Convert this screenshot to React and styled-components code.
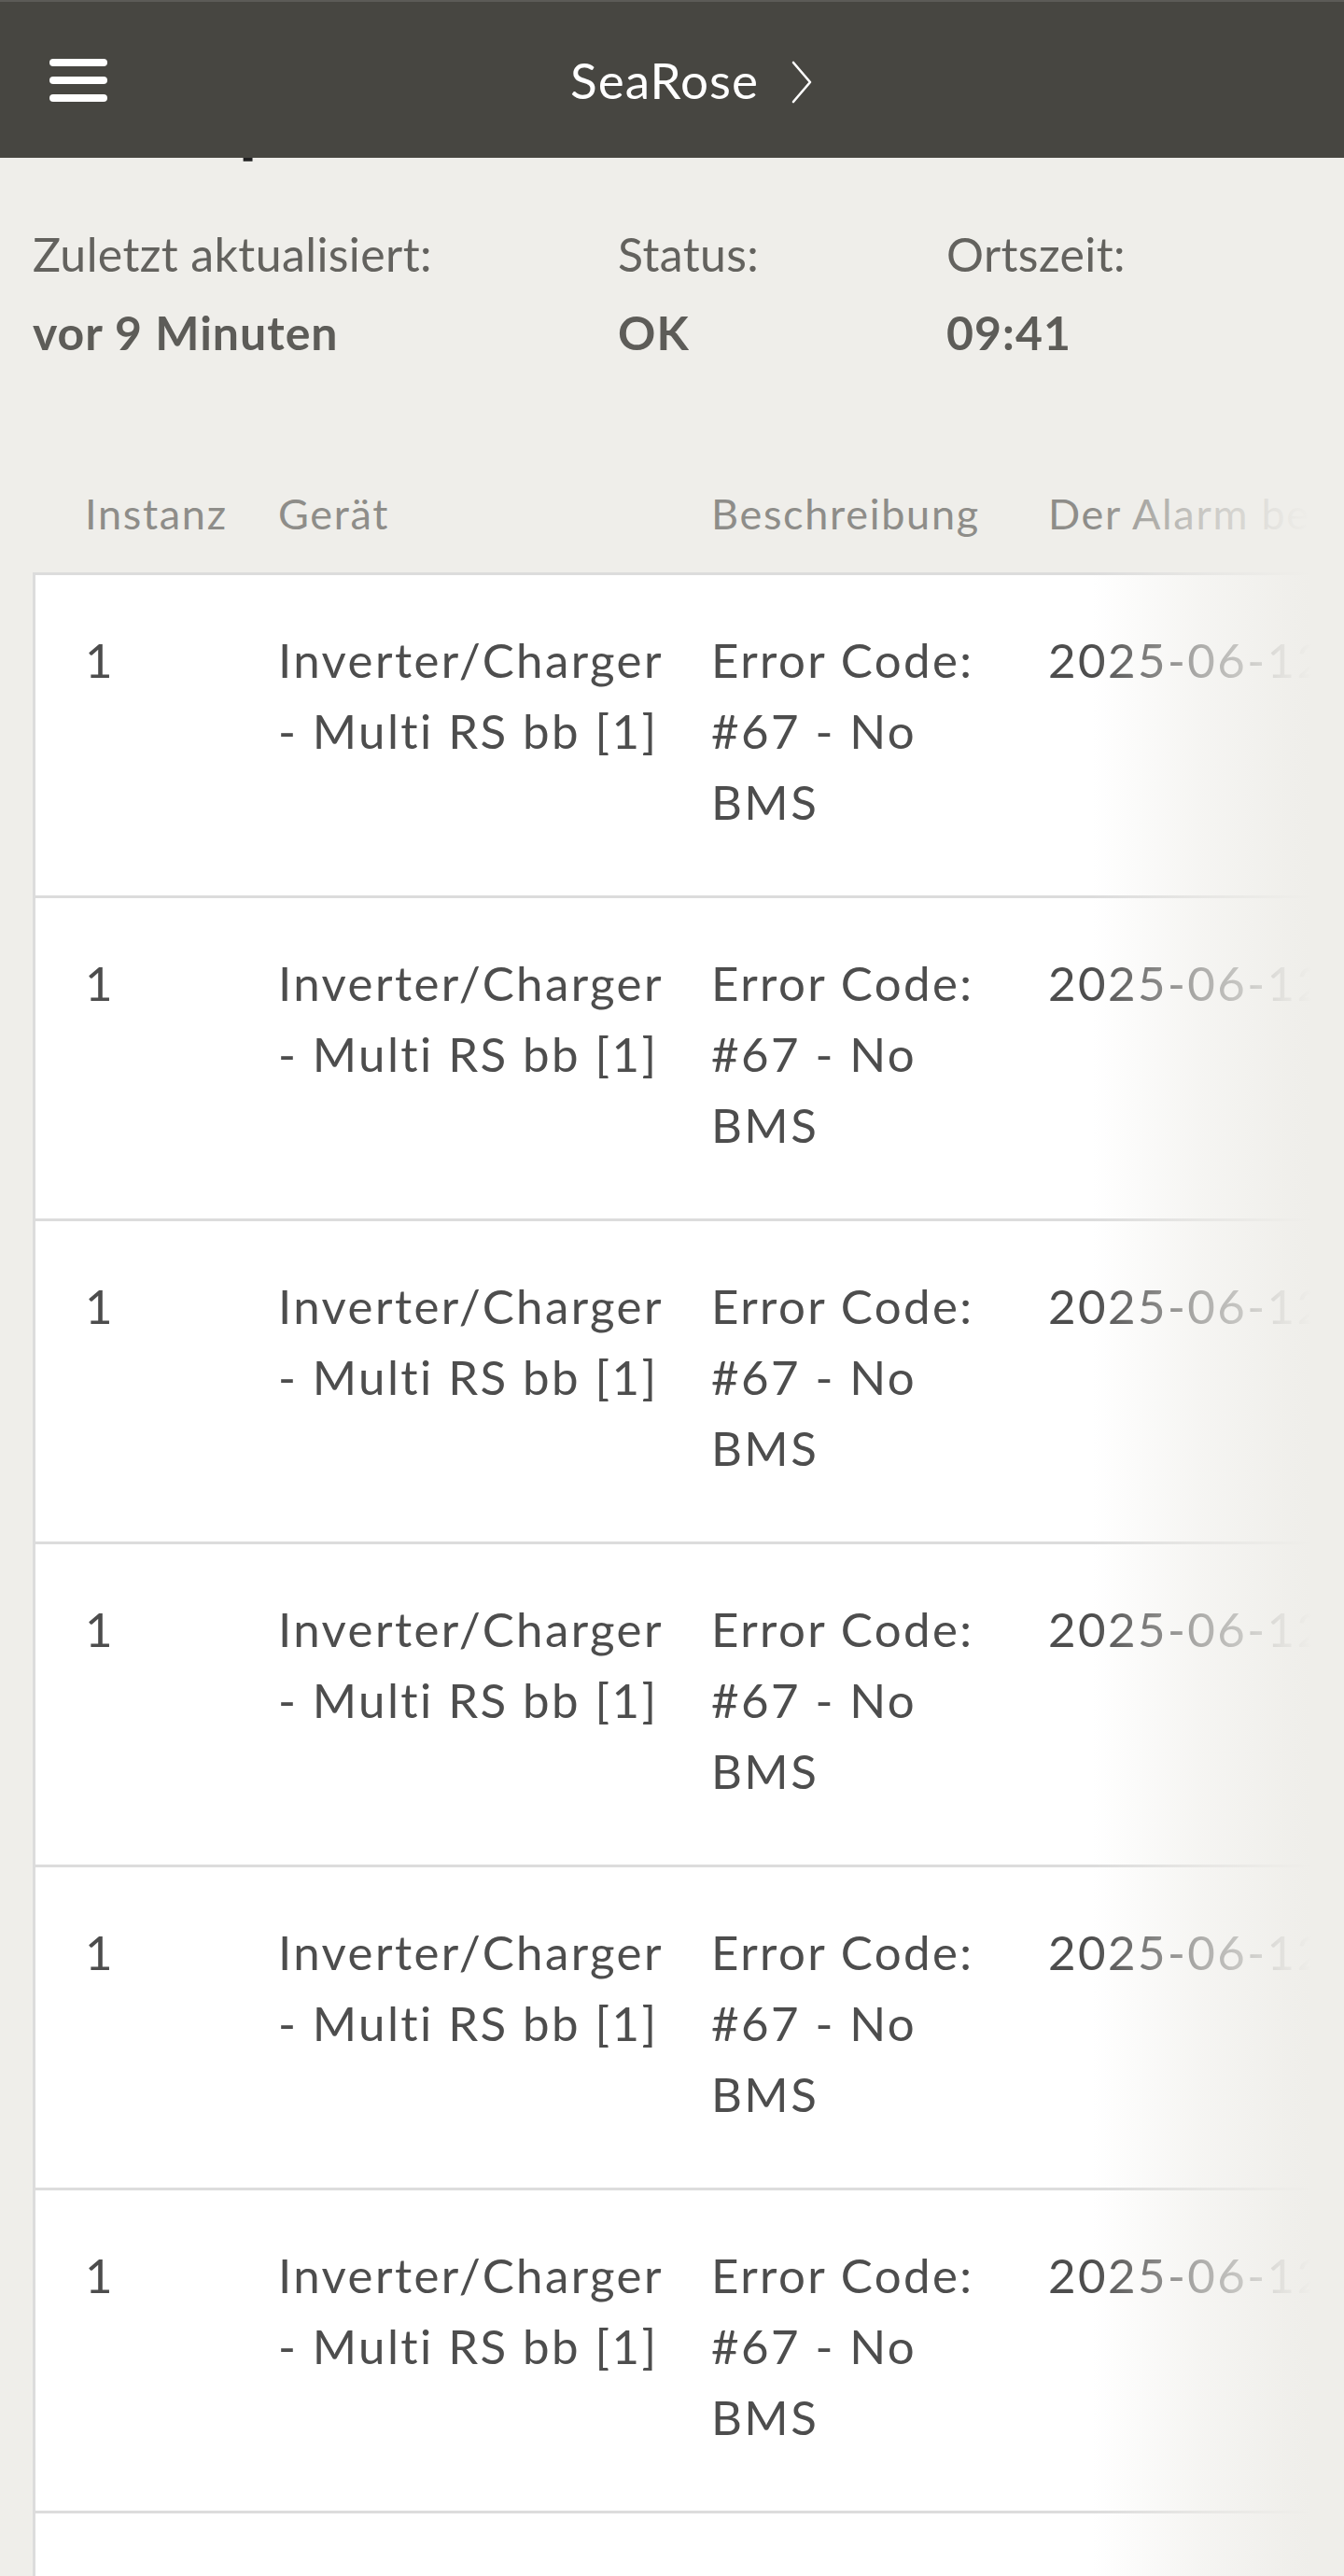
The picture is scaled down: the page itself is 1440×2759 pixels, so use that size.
import React from 'react'
import styled, { createGlobalStyle } from 'styled-components'

const GlobalStyle = createGlobalStyle`
  html, body {
    margin: 0;
    padding: 0;
    background: #efeeea;
  }
  body {
    font-family: Lato, "Open Sans", sans-serif;
    overflow-x: hidden;
  }
  * {
    box-sizing: border-box;
  }
`

const alarms = Array.from({ length: 8 }, (_, i) => ({
  id: i,
  instance: '1',
  device: 'Inverter/Charger - Multi RS bb [1]',
  description: 'Error Code: #67 - No BMS',
  started: '2025-06-12 07:58:21',
}))

export default function App() {
  return (
    <>
      <GlobalStyle />
      <TopBar>
        <MenuButton aria-label="Menü">
          <MenuLine />
          <MenuLine />
          <MenuLine />
        </MenuButton>
        <SiteName>
          SeaRose
          <svg width="22" height="46" viewBox="0 0 22 46">
            <path d="M2 2 L20 23 L2 44" fill="none" stroke="#fff" strokeWidth="2.6" strokeLinecap="round" strokeLinejoin="round" />
          </svg>
        </SiteName>
        <span />
      </TopBar>

      <Page>
        <PageTitle>Alarmprotokolle</PageTitle>

        <StatusGrid>
          <StatusItem>
            <StatusLabel>Zuletzt aktualisiert:</StatusLabel>
            <StatusValue>vor 9 Minuten</StatusValue>
          </StatusItem>
          <StatusItem>
            <StatusLabel>Status:</StatusLabel>
            <StatusValue>OK</StatusValue>
          </StatusItem>
          <StatusItem>
            <StatusLabel>Ortszeit:</StatusLabel>
            <StatusValue>09:41</StatusValue>
          </StatusItem>
        </StatusGrid>

        <TableScroll>
          <HeadRow>
            <span>Instanz</span>
            <span>Gerät</span>
            <span>Beschreibung</span>
            <span>Der Alarm begann</span>
          </HeadRow>
          <Card>
            {alarms.map(a => (
              <Row key={a.id}>
                <Cell>{a.instance}</Cell>
                <Cell $padRight={39}>{a.device}</Cell>
                <Cell $padRight={51}>{a.description}</Cell>
                <Cell $nowrap>{a.started}</Cell>
              </Row>
            ))}
          </Card>
        </TableScroll>
      </Page>
    </>
  )
}

const TopBar = styled.header`
  position: fixed;
  top: 0;
  left: 0;
  right: 0;
  height: 169px;
  z-index: 10;
  display: grid;
  grid-template-columns: 1fr auto 1fr;
  align-items: center;
  padding: 0 53px;
  background: #474641;
  border-top: 2px solid #5c5b57;
`

const MenuButton = styled.div`
  display: flex;
  flex-direction: column;
  gap: 11px;
  width: 62px;
`

const MenuLine = styled.span`
  display: block;
  height: 8px;
  border-radius: 4px;
  background: #fff;
`

const SiteName = styled.div`
  display: flex;
  align-items: center;
  color: #fff;
  font-size: 53px;
  font-weight: 400;
  letter-spacing: 1px;
  &::before {
    content: '';
    width: 41px;
  }
  svg {
    margin-left: 35px;
    margin-top: 4px;
  }
`

const Page = styled.main`
  padding: 0 35px;
`

const PageTitle = styled.h1`
  margin: 88px 0 0;
  font-size: 80px;
  line-height: 80px;
  font-weight: 700;
  letter-spacing: 1.6px;
  color: #222;
`

const StatusGrid = styled.div`
  display: grid;
  grid-template-columns: 627px 352px 1fr;
  margin-top: 62px;
`

const StatusItem = styled.div`
  display: flex;
  flex-direction: column;
`

const StatusLabel = styled.span`
  font-size: 50px;
  line-height: 84px;
  letter-spacing: 0.4px;
  color: #63625e;
`

const StatusValue = styled.span`
  font-size: 50px;
  line-height: 84px;
  font-weight: 700;
  letter-spacing: 1px;
  color: #5d5c58;
`

const TableScroll = styled.section`
  position: relative;
  overflow: hidden;
  margin-top: 122px;
  &::after {
    content: '';
    position: absolute;
    top: 0;
    right: 0;
    bottom: 0;
    width: 235px;
    pointer-events: none;
    background: linear-gradient(
      to right,
      rgba(239, 238, 234, 0) 0%,
      rgba(239, 238, 234, 0.6) 50%,
      rgba(239, 238, 234, 0.93) 88%,
      #efeeea 100%
    );
  }
`

const columns = '207px 464px 361px auto'

const HeadRow = styled.div`
  display: grid;
  grid-template-columns: ${columns};
  padding: 0 0 33px 56px;
  font-size: 45px;
  line-height: 60px;
  letter-spacing: 1.7px;
  color: #8e8d89;
  white-space: nowrap;
`

const Card = styled.div`
  width: 1800px;
  background: #fff;
  border-top: 3px solid #dcdcdc;
  border-left: 3px solid #dcdcdc;
`

const Row = styled.div`
  display: grid;
  grid-template-columns: ${columns};
  padding: 53px 0 62px 53px;
  border-bottom: 3px solid #dcdcdc;
  font-size: 51px;
  line-height: 76px;
  letter-spacing: 2.4px;
  color: #4d4d4d;
`

const Cell = styled.div`
  padding-right: ${p => p.$padRight || 0}px;
  white-space: ${p => (p.$nowrap ? 'nowrap' : 'normal')};
`
